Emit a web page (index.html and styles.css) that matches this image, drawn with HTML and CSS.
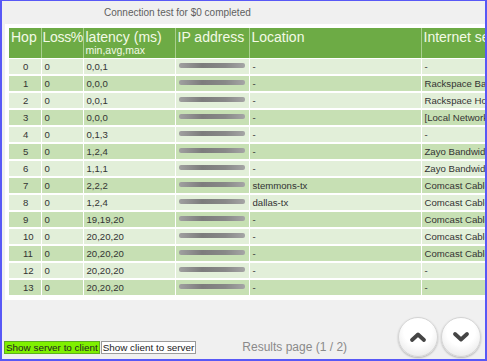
FILE: index.html
```html
<!DOCTYPE html>
<html lang="en">
<head>
    <meta charset="UTF-8">
    <meta name="viewport" content="width=device-width, initial-scale=1.0">
    <title>Connection test</title>
    <link rel="stylesheet" href="styles.css">
</head>
<body>
<div class="frame">
    <div class="caption">Connection test for $0 completed</div>

    <div class="panel">
        <table class="hops">
            <thead>
                <tr>
                    <th class="colHop">Hop</th>
                    <th class="colLoss">Loss%</th>
                    <th class="colLat">latency (ms)<span class="sub">min,avg,max</span></th>
                    <th class="colIp">IP address</th>
                    <th class="colLoc">Location</th>
                    <th class="colIsp">Internet service provider</th>
                </tr>
            </thead>
            <tbody>
                <tr><td class="hop">0</td><td>0</td><td>0,0,1</td><td><div class="ip"></div></td><td>-</td><td>-</td></tr>
                <tr><td class="hop">1</td><td>0</td><td>0,0,0</td><td><div class="ip"></div></td><td>-</td><td>Rackspace Backbone</td></tr>
                <tr><td class="hop">2</td><td>0</td><td>0,0,1</td><td><div class="ip"></div></td><td>-</td><td>Rackspace Hosting</td></tr>
                <tr><td class="hop">3</td><td>0</td><td>0,0,0</td><td><div class="ip"></div></td><td>-</td><td>[Local Network]</td></tr>
                <tr><td class="hop">4</td><td>0</td><td>0,1,3</td><td><div class="ip"></div></td><td>-</td><td>-</td></tr>
                <tr><td class="hop">5</td><td>0</td><td>1,2,4</td><td><div class="ip"></div></td><td>-</td><td>Zayo Bandwidth</td></tr>
                <tr><td class="hop">6</td><td>0</td><td>1,1,1</td><td><div class="ip"></div></td><td>-</td><td>Zayo Bandwidth</td></tr>
                <tr><td class="hop">7</td><td>0</td><td>2,2,2</td><td><div class="ip"></div></td><td>stemmons-tx</td><td>Comcast Cable</td></tr>
                <tr><td class="hop">8</td><td>0</td><td>1,2,4</td><td><div class="ip"></div></td><td>dallas-tx</td><td>Comcast Cable</td></tr>
                <tr><td class="hop">9</td><td>0</td><td>19,19,20</td><td><div class="ip"></div></td><td>-</td><td>Comcast Cable</td></tr>
                <tr><td class="hop">10</td><td>0</td><td>20,20,20</td><td><div class="ip"></div></td><td>-</td><td>Comcast Cable</td></tr>
                <tr><td class="hop">11</td><td>0</td><td>20,20,20</td><td><div class="ip"></div></td><td>-</td><td>Comcast Cable</td></tr>
                <tr><td class="hop">12</td><td>0</td><td>20,20,20</td><td><div class="ip"></div></td><td>-</td><td>-</td></tr>
                <tr><td class="hop">13</td><td>0</td><td>20,20,20</td><td><div class="ip"></div></td><td>-</td><td>-</td></tr>
            </tbody>
        </table>
    </div>

    <div class="footer">
        <div class="toggles">
            <button class="toggle active">Show server to client</button>
            <button class="toggle">Show client to server</button>
        </div>
        <div class="pager">Results page (1 / 2)</div>
        <div class="arrows">
            <button class="round">
                <svg width="18" height="12" viewBox="0 0 18 12"><path d="M3 9 L9 3.5 L15 9" fill="none" stroke="#454545" stroke-width="3.8" stroke-linecap="round" stroke-linejoin="round"/></svg>
            </button>
            <button class="round">
                <svg width="18" height="12" viewBox="0 0 18 12"><path d="M3 3 L9 8.5 L15 3" fill="none" stroke="#454545" stroke-width="3.8" stroke-linecap="round" stroke-linejoin="round"/></svg>
            </button>
        </div>
    </div>
</div>
</body>
</html>
```

FILE: styles.css
```css
body {
    margin: 0;
    font-family: "Liberation Sans", Arial, sans-serif;
}

.frame {
    width: 487px;
    height: 361px;
    box-sizing: border-box;
    border: 2px solid #5858f6;
    border-top-width: 1px;
    background-color: #f0f0f0;
    display: flex;
    flex-direction: column;
    overflow: hidden;
}

.caption {
    height: 23px;
    line-height: 24px;
    padding-left: 102px;
    font-size: 10px;
    color: #5f5f5f;
}

.panel {
    height: 276px;
    box-sizing: border-box;
    margin-left: 3px;
    padding: 4px 0 0 4px;
    background-color: #fff;
    overflow: hidden;
}

.hops {
    border-collapse: collapse;
    table-layout: fixed;
    width: 600px;
}

.hops th {
    height: 30px;
    box-sizing: border-box;
    padding: 1px 2px 0 2px;
    background-color: #6dab45;
    color: #f3fae6;
    font-size: 14px;
    line-height: 16px;
    font-weight: normal;
    text-align: left;
    vertical-align: top;
    white-space: nowrap;
    overflow: hidden;
    border-right: 1px solid #a9cf8e;
    border-bottom: 1px solid #fff;
}

.hops th.colLoss {
    padding-left: 1px;
    padding-right: 0;
    letter-spacing: -0.3px;
}

.hops .sub {
    display: block;
    font-size: 10.5px;
    line-height: 10px;
}

.colHop { width: 32px; }
.colLoss { width: 42px; }
.colLat { width: 92px; }
.colIp { width: 74px; }
.colLoc { width: 172px; }
.colIsp { width: 188px; }

.hops td {
    height: 15px;
    padding: 0 3px;
    font-size: 9.6px;
    color: #333;
    white-space: nowrap;
    overflow: hidden;
    border-right: 1px solid #fff;
    border-bottom: 2px solid #fff;
    vertical-align: middle;
}

.hops tbody tr:nth-child(odd) td {
    background-color: #e2efd9;
}

.hops tbody tr:nth-child(even) td {
    background-color: #c7e0b4;
}

.hops td.hop {
    padding-left: 14px;
}

.ip {
    width: 66px;
    height: 5px;
    margin-top: -2px;
    border-radius: 2px;
    background: linear-gradient(90deg, #a0a0a0, #7c7c7c 35%, #888 70%, #a5a5a5);
    filter: blur(0.6px);
}

.footer {
    flex: 1;
    display: flex;
    align-items: flex-end;
    padding: 0 4px 2px 2px;
}

.toggles {
    display: flex;
    margin-bottom: 3px;
}

.toggle {
    height: 13px;
    padding: 0 1px;
    margin: 0;
    font-family: "Liberation Sans", Arial, sans-serif;
    font-size: 9.9px;
    line-height: 11px;
    color: #222;
    background-color: #fff;
    border: 1px solid #9a9a9a;
    border-radius: 0;
}

.toggle.active {
    background-color: #7ff000;
    border-color: #5fae20;
    margin-right: 1px;
}

.pager {
    margin-left: 46px;
    margin-bottom: 3px;
    font-size: 12px;
    color: #8a8a8a;
}

.arrows {
    display: flex;
    gap: 3px;
    margin-left: auto;
}

.round {
    width: 40px;
    height: 40px;
    padding: 0;
    border-radius: 50%;
    border: 1px solid #d4d4d4;
    background: radial-gradient(circle at 50% 35%, #ffffff 45%, #ececec 80%, #dcdcdc);
    box-shadow: 0 1px 2px rgba(0, 0, 0, 0.25);
    display: flex;
    align-items: center;
    justify-content: center;
}
```
